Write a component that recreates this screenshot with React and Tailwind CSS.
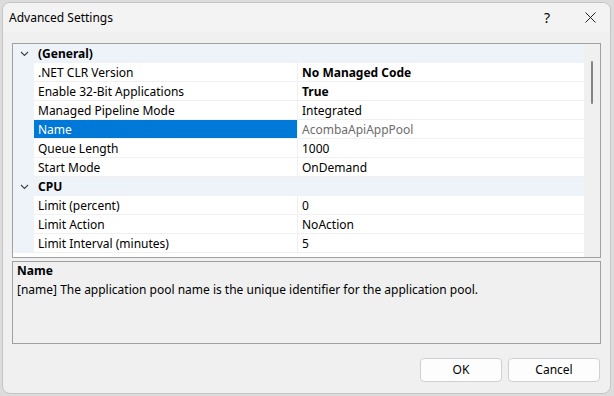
import React from "react"

const general = [
  { name: ".NET CLR Version", value: "No Managed Code", bold: true },
  { name: "Enable 32-Bit Applications", value: "True", bold: true },
  { name: "Managed Pipeline Mode", value: "Integrated" },
  { name: "Name", value: "AcombaApiAppPool", selected: true },
  { name: "Queue Length", value: "1000" },
  { name: "Start Mode", value: "OnDemand" },
]

const cpu = [
  { name: "Limit (percent)", value: "0" },
  { name: "Limit Action", value: "NoAction" },
  { name: "Limit Interval (minutes)", value: "5" },
]

function Chevron() {
  return (
    <svg width="9" height="6" viewBox="0 0 9 6" className="text-[#444]">
      <path d="M1 1l3.5 3.5L8 1" fill="none" stroke="currentColor" strokeWidth="1.2" />
    </svg>
  )
}

function Category({ label }) {
  return (
    <div className="flex h-[19px] items-center bg-[#eef3fa]">
      <div className="flex w-[21px] justify-center pl-[1px]">
        <Chevron />
      </div>
      <span className="pl-[4px] font-bold">{label}</span>
    </div>
  )
}

function Row({ item }) {
  return (
    <div className="flex h-[19px]">
      <div className="w-[21px] bg-[#eef3fa]" />
      <div
        className={
          "flex w-[263px] items-center border-b border-[#f0f0f0] pl-[4px] pt-[1px] " +
          (item.selected ? "bg-[#0078d7] text-white" : "")
        }
      >
        {item.name}
      </div>
      <div
        className={
          "flex flex-1 items-center border-b border-l border-[#f0f0f0] pl-[4px] pt-[1px] " +
          (item.bold ? "font-bold " : "") +
          (item.selected ? "text-[#6d6d6d]" : "")
        }
      >
        {item.value}
      </div>
    </div>
  )
}

export default function App() {
  return (
    <div
      className="h-[396px] w-[614px] bg-[#dcdcdc] p-[2px] text-[12px] text-black"
      style={{ fontFamily: "'Noto Sans', 'Open Sans', sans-serif" }}
    >
      <div className="flex h-[392px] w-[609px] flex-col overflow-hidden rounded-lg border border-[#c4c4c4] bg-[#f0f0f0]">
        {/* Title bar */}
        <div className="flex h-[29px] items-center bg-[#f3f3f3] pl-[6px]">
          <span className="text-[12px]">Advanced Settings</span>
          <div className="ml-auto flex items-center">
            <span className="w-[46px] text-center text-[14px]">?</span>
            <div className="flex w-[40px] justify-center">
              <svg width="11" height="11" viewBox="0 0 11 11">
                <path d="M0.5 0.5l10 10M10.5 0.5l-10 10" stroke="#222" strokeWidth="1" />
              </svg>
            </div>
          </div>
        </div>

        <div className="flex flex-1 flex-col px-[9px] pt-[11px]">
          {/* Property grid */}
          <div className="flex h-[215px] border border-[#a0a0a0] bg-white">
            <div className="flex-1">
              <Category label="(General)" />
              {general.map((item) => (
                <Row key={item.name} item={item} />
              ))}
              <Category label="CPU" />
              {cpu.map((item) => (
                <Row key={item.name} item={item} />
              ))}
            </div>
            <div className="flex w-[16px] justify-center bg-[#f0f0f0] pt-[17px]">
              <div className="h-[43px] w-[2px] rounded-full bg-[#858585]" />
            </div>
          </div>

          {/* Description */}
          <div className="mt-[3px] h-[83px] border border-[#a0a0a0] bg-[#f0f0f0] px-[4px]">
            <div className="font-bold leading-[17px]">Name</div>
            <div className="mt-[2px] leading-[17px]">
              [name] The application pool name is the unique identifier for the application pool.
            </div>
          </div>

          {/* Buttons */}
          <div className="mt-[14px] flex justify-end gap-[6px] pr-[1px]">
            <button className="h-[24px] w-[82px] rounded-[4px] border border-[#d0d0d0] bg-[#fdfdfd]">
              OK
            </button>
            <button className="h-[24px] w-[92px] rounded-[4px] border border-[#d0d0d0] bg-[#fdfdfd]">
              Cancel
            </button>
          </div>
        </div>
      </div>
    </div>
  )
}
